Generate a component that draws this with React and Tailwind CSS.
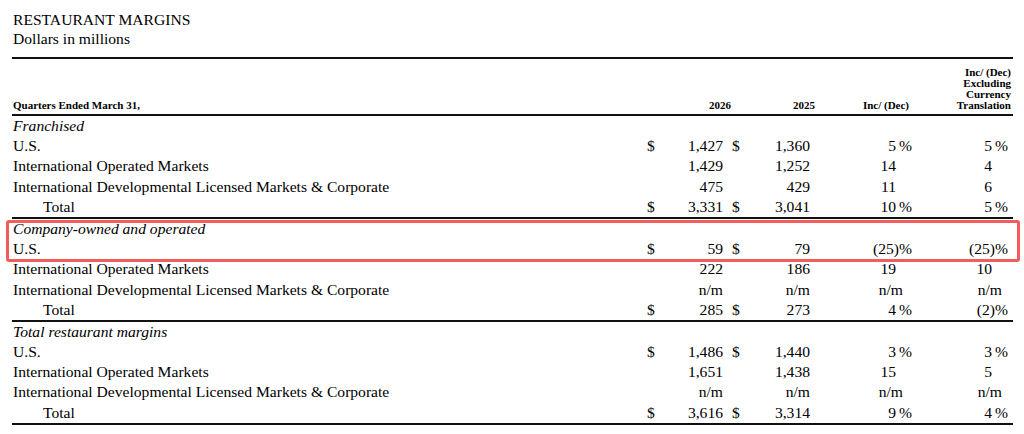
import React from "react";

const sections = [
  {
    title: "Franchised",
    rows: [
      { label: "U.S.", d1: true, v1: "1,427", d2: true, v2: "1,360", c3: "5", p3: true, c4: "5", p4: true },
      { label: "International Operated Markets", v1: "1,429", v2: "1,252", c3: "14", c4: "4" },
      { label: "International Developmental Licensed Markets & Corporate", v1: "475", v2: "429", c3: "11", c4: "6" },
      { label: "Total", total: true, d1: true, v1: "3,331", d2: true, v2: "3,041", c3: "10", p3: true, c4: "5", p4: true },
    ],
  },
  {
    title: "Company-owned and operated",
    highlight: true,
    rows: [
      { label: "U.S.", d1: true, v1: "59", d2: true, v2: "79", c3: "(25", n3: true, p3: true, c4: "(25", n4: true, p4: true },
      { label: "International Operated Markets", v1: "222", v2: "186", c3: "19", c4: "10" },
      { label: "International Developmental Licensed Markets & Corporate", v1: "n/m", v2: "n/m", nm: true },
      { label: "Total", total: true, d1: true, v1: "285", d2: true, v2: "273", c3: "4", p3: true, c4: "(2", n4: true, p4: true },
    ],
  },
  {
    title: "Total restaurant margins",
    rows: [
      { label: "U.S.", d1: true, v1: "1,486", d2: true, v2: "1,440", c3: "3", p3: true, c4: "3", p4: true },
      { label: "International Operated Markets", v1: "1,651", v2: "1,438", c3: "15", c4: "5" },
      { label: "International Developmental Licensed Markets & Corporate", v1: "n/m", v2: "n/m", nm: true },
      { label: "Total", total: true, d1: true, v1: "3,616", d2: true, v2: "3,314", c3: "9", p3: true, c4: "4", p4: true },
    ],
  },
];

function Row({ r }) {
  return (
    <div className="flex h-[20.2px] items-center leading-[20.2px] whitespace-nowrap">
      <div className={`flex-1 ${r.total ? "pl-[31px]" : "pl-[1px]"}`}>{r.label}</div>
      <div className="w-[20px] pl-[7px]">{r.d1 ? "$" : ""}</div>
      <div className="w-[64px] pr-[1px] text-right">{r.v1}</div>
      <div className="w-[36px] pl-[8px]">{r.d2 ? "$" : ""}</div>
      <div className="w-[51px] pr-[1px] text-right">{r.v2}</div>
      {r.nm ? (
        <>
          <div className="w-[103px] pr-[11px] text-right">n/m</div>
          <div className="w-[99px] pr-[11px] text-right">n/m</div>
        </>
      ) : (
        <>
          <div className="w-[85px] text-right">
            {r.c3}
            {r.n3 ? <span className="-mr-[3px]">)</span> : null}
          </div>
          <div className="w-[18px] pl-[3px]">{r.p3 ? "%" : ""}</div>
          <div className="w-[78px] text-right">
            {r.c4}
            {r.n4 ? <span className="-mr-[3px]">)</span> : null}
          </div>
          <div className="w-[21px] pl-[3px]">{r.p4 ? "%" : ""}</div>
        </>
      )}
    </div>
  );
}

function Section({ s }) {
  const titleRow = (
    <div className="h-[20.2px] pl-[1px] italic leading-[20.2px]">{s.title}</div>
  );
  return (
    <div>
      {s.highlight ? (
        <div className="relative">
          {titleRow}
          <Row r={s.rows[0]} />
          <div className="absolute -left-[6px] -right-[7px] top-[1px] -bottom-[3px] rounded-[3px] border-[3px] border-[#f25c5c]" />
        </div>
      ) : (
        <>
          {titleRow}
          <Row r={s.rows[0]} />
        </>
      )}
      {s.rows.slice(1).map((r, i) => (
        <Row key={i} r={r} />
      ))}
      <div className="h-[2px] bg-[#111]" />
    </div>
  );
}

export default function App() {
  return (
    <div
      className="w-[1024px] h-[434px] bg-white text-black text-[15.6px] overflow-hidden"
      style={{ fontFamily: '"Liberation Serif", "Times New Roman", serif' }}
    >
      <div className="w-[1013px] pl-[12px] pt-[10px]">
        <div className="pl-[1px] leading-[19px]">
          <div>RESTAURANT MARGINS</div>
          <div>Dollars in millions</div>
        </div>
        <div className="mt-[9px] h-[2px] bg-[#111]" />
        <div className="flex h-[55px] items-end pb-[3px] text-[11px] font-bold leading-[11px]">
          <div className="flex-1 pl-[1px]">Quarters Ended March 31,</div>
          <div className="w-[91px] text-right">2026</div>
          <div className="w-[84px] text-right">2025</div>
          <div className="w-[94px] text-right">Inc/ (Dec)</div>
          <div className="w-[102px] text-right">
            <div>Inc/ (Dec)</div>
            <div>Excluding</div>
            <div>Currency</div>
            <div>Translation</div>
          </div>
          <div className="w-[2px]" />
        </div>
        <div className="h-[2px] bg-[#111]" />
        {sections.map((s, i) => (
          <Section key={i} s={s} />
        ))}
      </div>
    </div>
  );
}
